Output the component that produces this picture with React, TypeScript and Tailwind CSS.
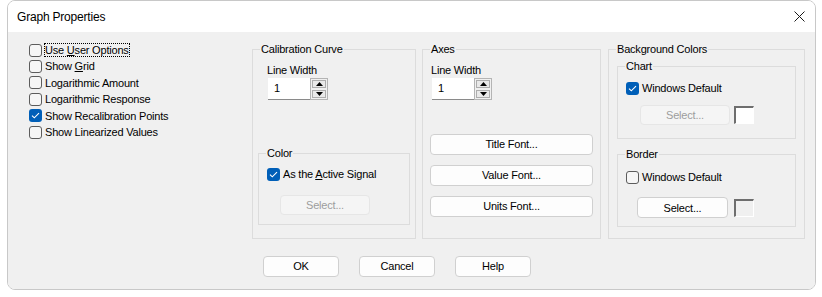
import React from 'react'

const font = "font-['Liberation_Sans',Arial,sans-serif]"

const Box = ({ checked }: { checked?: boolean }) =>
  checked ? (
    <span className="flex h-[13px] w-[13px] shrink-0 items-center justify-center rounded-[3px] bg-[#005fb8]">
      <svg width="9" height="7" viewBox="0 0 9 7" fill="none">
        <path d="M1 3.6 L3.3 5.8 L8 1.2" stroke="#fff" strokeWidth="1.1" />
      </svg>
    </span>
  ) : (
    <span className="h-[13px] w-[13px] shrink-0 rounded-[3px] border border-[#5c5c5c] bg-[#f6f6f6]" />
  )

const Check = ({ checked, children }: { checked?: boolean; children: React.ReactNode }) => (
  <div className="flex h-[16.4px] items-center">
    <Box checked={checked} />
    <span className="ml-[3px]">{children}</span>
  </div>
)

const Btn = ({ children, className = '' }: { children: React.ReactNode; className?: string }) => (
  <div
    className={`flex h-[21px] items-center justify-center rounded-[4px] border border-[#d0d0d0] bg-[#fdfdfd] ${className}`}
  >
    {children}
  </div>
)

const Disabled = ({ className = '' }: { className?: string }) => (
  <div
    className={`flex h-[20px] items-center justify-center rounded-[4px] border border-[#e6e6e6] bg-[#f5f5f5] text-[#9d9d9d] ${className}`}
  >
    Select...
  </div>
)

const Swatch = ({ fill }: { fill: string }) => (
  <div className={`h-[18px] w-[20px] border-t-[2px] border-l-[2px] border-b border-r border-t-[#6e6e6e] border-l-[#6e6e6e] border-b-[#ffffff] border-r-[#ffffff] ${fill}`} />
)

const Spinner = () => (
  <div className="mt-[1px] flex">
    <div className="flex h-[22px] w-[42px] items-center border-b border-[#8a8a8a] bg-white pl-[6px]">1</div>
    <div className="flex h-[22px] w-[18px] flex-col gap-[2px] border border-[#b4b4b4] bg-[#f0f0f0] p-[1px]">
      <div className="flex flex-1 items-center justify-center border border-[#adadad] bg-[#e9e9e9]">
        <svg width="7" height="4" viewBox="0 0 7 4">
          <path d="M0 4 L3.5 0 L7 4 Z" fill="#000" />
        </svg>
      </div>
      <div className="flex flex-1 items-center justify-center border border-[#adadad] bg-[#e9e9e9]">
        <svg width="7" height="4" viewBox="0 0 7 4">
          <path d="M0 0 L3.5 4 L7 0 Z" fill="#000" />
        </svg>
      </div>
    </div>
  </div>
)

const Group = ({
  title,
  className = '',
  children,
}: {
  title: string
  className?: string
  children: React.ReactNode
}) => (
  <fieldset className={`border border-[#dcdcdc] ${className}`}>
    <legend className="ml-[7px] px-[1px] leading-[14px]">{title}</legend>
    {children}
  </fieldset>
)

export default function App() {
  return (
    <div className={`h-[297px] w-[822px] bg-white pl-[7px] text-[11px] tracking-[-0.2px] text-black ${font}`}>
      <div className="flex h-[290px] w-[809px] flex-col overflow-hidden rounded-[8px] border border-[#c8c8c8]">
        <div className="flex h-[31px] shrink-0 items-center justify-between bg-white pl-[9px] pr-[10px]">
          <span className="text-[12px]">Graph Properties</span>
          <svg width="11" height="11" viewBox="0 0 11 11">
            <path d="M0.5 0.5 L10.5 10.5 M10.5 0.5 L0.5 10.5" stroke="#1a1a1a" strokeWidth="1" />
          </svg>
        </div>

        <div className="flex flex-1 flex-col bg-[#f0f0f0]">
          <div className="flex pt-[10px]">
            <div className="w-[244px] pl-[21px]">
              <Check>
                <span className="outline-1 outline-dotted outline-offset-[0px] outline-black">
                  Use <u>U</u>ser Options
                </span>
              </Check>
              <Check>
                Show <u>G</u>rid
              </Check>
              <Check>Logarithmic Amount</Check>
              <Check>Logarithmic Response</Check>
              <Check checked>Show Recalibration Points</Check>
              <Check>Show Linearized Values</Check>
            </div>

            <Group title="Calibration Curve" className="h-[197px] w-[164px]">
              <div className="px-[5px] pt-[7px]">
                <div className="pl-[9px] leading-[14px]">Line Width</div>
                <div className="pl-[10px]">
                  <Spinner />
                </div>
                <Group title="Color" className="mt-[46px] h-[79px]">
                  <div className="pl-[8px] pt-[6px]">
                    <Check checked>
                      As the <u>A</u>ctive Signal
                    </Check>
                  </div>
                  <div className="pl-[21px] pt-[13px]">
                    <Disabled className="w-[90px]" />
                  </div>
                </Group>
              </div>
            </Group>

            <Group title="Axes" className="ml-[6px] h-[197px] w-[179px]">
              <div className="px-[7px] pt-[7px]">
                <div className="pl-[1px] leading-[14px]">Line Width</div>
                <div className="pl-[2px]">
                  <Spinner />
                </div>
                <div className="mt-[34px] flex flex-col gap-[10px]">
                  <Btn>Title Font...</Btn>
                  <Btn>Value Font...</Btn>
                  <Btn>Units Font...</Btn>
                </div>
              </div>
            </Group>

            <Group title="Background Colors" className="ml-[7px] h-[197px] w-[197px]">
              <div className="px-[8px] pt-[3px]">
                <Group title="Chart" className="h-[80px]">
                  <div className="pl-[8px] pt-[7px]">
                    <Check checked>Windows Default</Check>
                  </div>
                  <div className="flex items-center pl-[22px] pt-[9px]">
                    <Disabled className="w-[90px]" />
                    <div className="ml-[4px]">
                      <Swatch fill="bg-white" />
                    </div>
                  </div>
                </Group>
                <Group title="Border" className="mt-[8px] h-[80px]">
                  <div className="pl-[8px] pt-[8px]">
                    <Check>Windows Default</Check>
                  </div>
                  <div className="flex items-center pl-[19px] pt-[12px]">
                    <Btn className="w-[91px]">Select...</Btn>
                    <div className="ml-[6px]">
                      <Swatch fill="bg-[#f0f0f0]" />
                    </div>
                  </div>
                </Group>
              </div>
            </Group>
          </div>

          <div className="flex gap-[20px] pl-[255px] pt-[17px]">
            <Btn className="w-[76px] border-[#0067c0]">OK</Btn>
            <Btn className="w-[76px]">Cancel</Btn>
            <Btn className="w-[76px]">Help</Btn>
          </div>
        </div>
      </div>
    </div>
  )
}
